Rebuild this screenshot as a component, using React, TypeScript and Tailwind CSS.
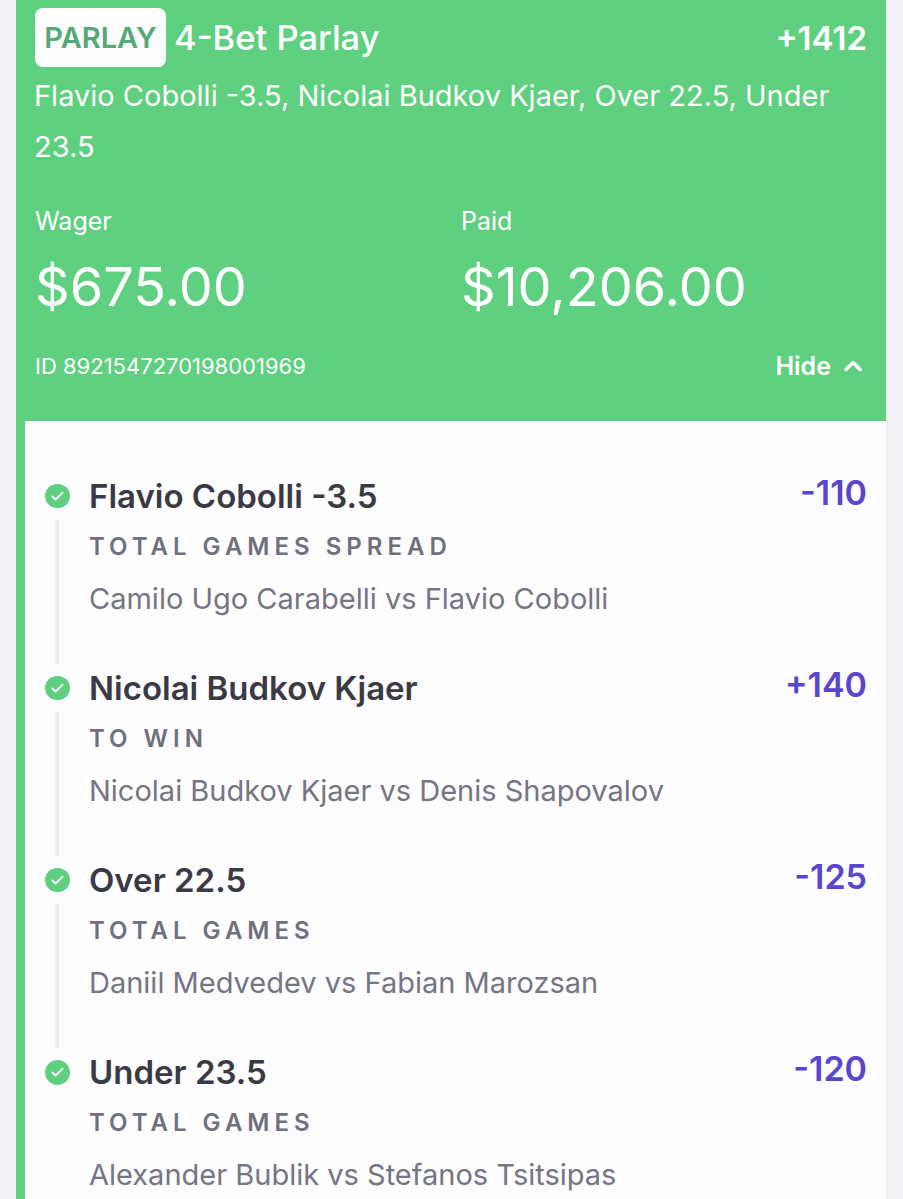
import { ChevronUp, Check } from "lucide-react";

const legs = [
  { pick: "Flavio Cobolli -3.5", market: "TOTAL GAMES SPREAD", match: "Camilo Ugo Carabelli vs Flavio Cobolli", odds: "-110" },
  { pick: "Nicolai Budkov Kjaer", market: "TO WIN", match: "Nicolai Budkov Kjaer vs Denis Shapovalov", odds: "+140" },
  { pick: "Over 22.5", market: "TOTAL GAMES", match: "Daniil Medvedev vs Fabian Marozsan", odds: "-125" },
  { pick: "Under 23.5", market: "TOTAL GAMES", match: "Alexander Bublik vs Stefanos Tsitsipas", odds: "-120" },
];

function Leg({ pick, market, match, odds, last }: { pick: string; market: string; match: string; odds: string; last: boolean }) {
  return (
    <div className="flex h-[192px] shrink-0">
      <div className="flex w-[64px] shrink-0 flex-col items-start pl-[20px]">
        <div className="mt-[12px] flex h-[25px] w-[25px] items-center justify-center rounded-full bg-[#5fcf80]">
          <Check size={15} strokeWidth={3} className="text-white" />
        </div>
        {!last && <div className="ml-[10px] mt-[12px] h-[150px] w-[4px] bg-[#ececf0]" />}
      </div>
      <div className="flex-1">
        <div className="flex items-start justify-between pr-[19px]">
          <div className="text-[33px] font-semibold leading-[48px] text-[#3a3a44]">{pick}</div>
          <div className="-mt-px text-[34px] font-semibold leading-[44px] text-[#5a45cf]">{odds}</div>
        </div>
        <div className="mt-[11px] text-[24px] font-semibold leading-[32px] tracking-[5px] text-[#6f6f7d]">{market}</div>
        <div className="mt-[16px] text-[29px] leading-[40px] text-[#757583]">{match}</div>
      </div>
    </div>
  );
}

export default function App() {
  return (
    <div className="h-[1199px] w-[903px] overflow-hidden bg-[#f2f2f6] px-[16px] pr-[17px] font-['Inter',sans-serif]">
      <div className="h-full border-l-[9px] border-[#5fcf80] bg-[#fdfcfe]">
        <div className="-ml-[9px] h-[421px] bg-[#5fcf80] pl-[19px] pr-[19px] pt-[8px] text-white">
          <div className="flex items-center">
            <div className="flex h-[59px] w-[131px] items-center justify-center rounded-[8px] bg-[#fcfdfc] text-[29px] font-semibold text-[#55a877]">
              PARLAY
            </div>
            <div className="ml-[8px] flex-1 text-[34.5px] font-medium">4-Bet Parlay</div>
            <div className="pt-[3px] text-[33px] font-semibold">+1412</div>
          </div>
          <div className="mt-[3px] -ml-px text-[29px] leading-[51px]">
            Flavio Cobolli -3.5, Nicolai Budkov Kjaer, Over 22.5, Under 23.5
          </div>
          <div className="mt-[30px] flex">
            <div className="w-[426px]">
              <div className="text-[25px] leading-[38px]">Wager</div>
              <div className="mt-[15px] text-[54px] leading-[64px]">$675.00</div>
            </div>
            <div>
              <div className="text-[25px] leading-[38px]">Paid</div>
              <div className="mt-[15px] text-[54px] leading-[64px]">$10,206.00</div>
            </div>
          </div>
          <div className="mt-[31px] flex items-center justify-between">
            <div className="text-[22px] leading-[32px]">ID 8921547270198001969</div>
            <div className="flex items-center gap-[8px] text-[25px] font-semibold leading-[32px]">
              Hide
              <ChevronUp size={28} strokeWidth={3} />
            </div>
          </div>
        </div>
        <div className="flex flex-col pt-[51px]">
          {legs.map((leg, i) => (
            <Leg key={leg.pick} {...leg} last={i === legs.length - 1} />
          ))}
        </div>
      </div>
    </div>
  );
}
